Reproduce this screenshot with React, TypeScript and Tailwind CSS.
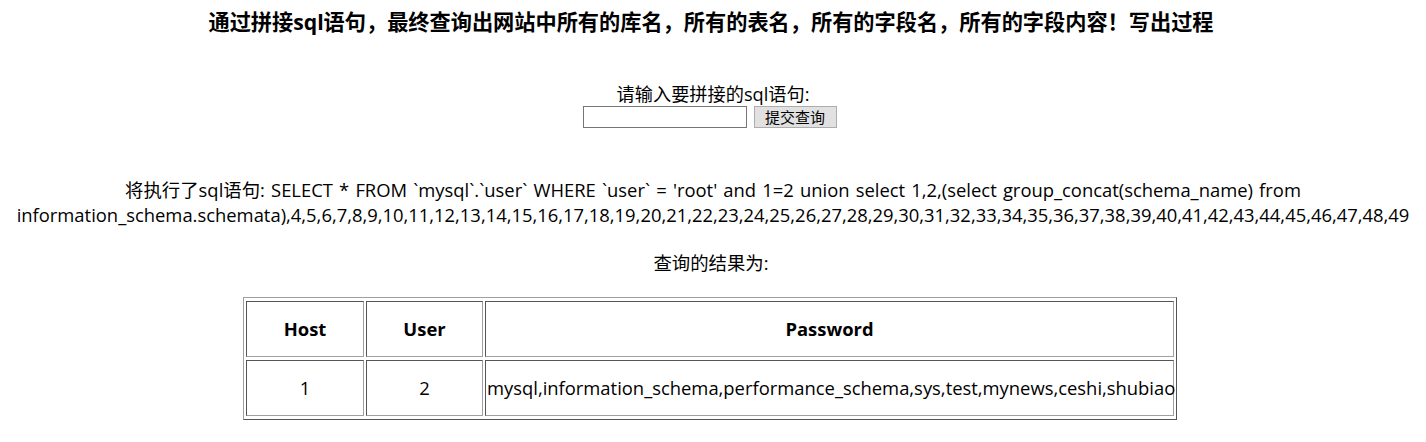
import { useState } from "react";

const font = "font-['Open_Sans','Noto_Sans_CJK_SC',sans-serif]";

const numbers = Array.from({ length: 46 }, (_, i) => i + 4).join(",");

const cell = "border border-t-[#555] border-l-[#555] border-r-[#a0a0a0] border-b-[#a0a0a0]";

export default function App() {
  const [sql, setSql] = useState("");

  return (
    <div className={`${font} w-[1426px] h-[442px] bg-white text-black flex flex-col items-center overflow-hidden`}>
      {/* page title */}
      <h3 className="mt-[8px] mr-[4px] h-[28px] leading-[28px] text-[21.2px] font-bold">
        通过拼接sql语句，最终查询出网站中所有的库名，所有的表名，所有的字段名，所有的字段内容！写出过程
      </h3>

      {/* query form */}
      <form className="mt-[46px] flex flex-col items-center" onSubmit={(e) => e.preventDefault()}>
        <label className="h-[24px] leading-[24px] text-[18.2px]">请输入要拼接的sql语句:</label>
        <div className="mr-[7px] flex items-center gap-[7px]">
          <input
            value={sql}
            onChange={(e) => setSql(e.target.value)}
            className="w-[164px] h-[22px] border border-[#767676] bg-white px-1 text-[15px] outline-none"
          />
          <button
            type="submit"
            className="w-[83px] h-[22px] border border-[#adadad] bg-[#e1e1e1] text-[15px] leading-[20px]"
          >
            提交查询
          </button>
        </div>
      </form>

      {/* executed statement */}
      <p className="mt-[49px] text-center text-[18.4px] leading-[25px] whitespace-nowrap">
        <span className="[word-spacing:1.4px]">
          将执行了sql语句: SELECT * FROM `mysql`.`user` WHERE `user` = 'root' and 1=2 union select 1,2,(select group_concat(schema_name) from
        </span>
        <br />
        information_schema.schemata),{numbers}
      </p>

      <p className="mt-[23px] mr-[4px] text-[18.4px] leading-[25px]">查询的结果为:</p>

      {/* result table */}
      <table className="mt-[22px] mr-[6px] w-[934px] table-fixed border-separate border-spacing-x-[2px] border-spacing-y-[3px] border border-t-[#a0a0a0] border-l-[#a0a0a0] border-r-[#555] border-b-[#555] text-[18.4px]">
        <thead>
          <tr className="h-[56px]">
            <th className={`w-[118px] ${cell} font-bold`}>Host</th>
            <th className={`w-[117px] ${cell} font-bold`}>User</th>
            <th className={`${cell} font-bold`}>Password</th>
          </tr>
        </thead>
        <tbody>
          <tr className="h-[56px]">
            <td className={`${cell} text-center`}>1</td>
            <td className={`${cell} text-center`}>2</td>
            <td className={`${cell} px-px whitespace-nowrap`}>
              mysql,information_schema,performance_schema,sys,test,mynews,ceshi,shubiao
            </td>
          </tr>
        </tbody>
      </table>
    </div>
  );
}
